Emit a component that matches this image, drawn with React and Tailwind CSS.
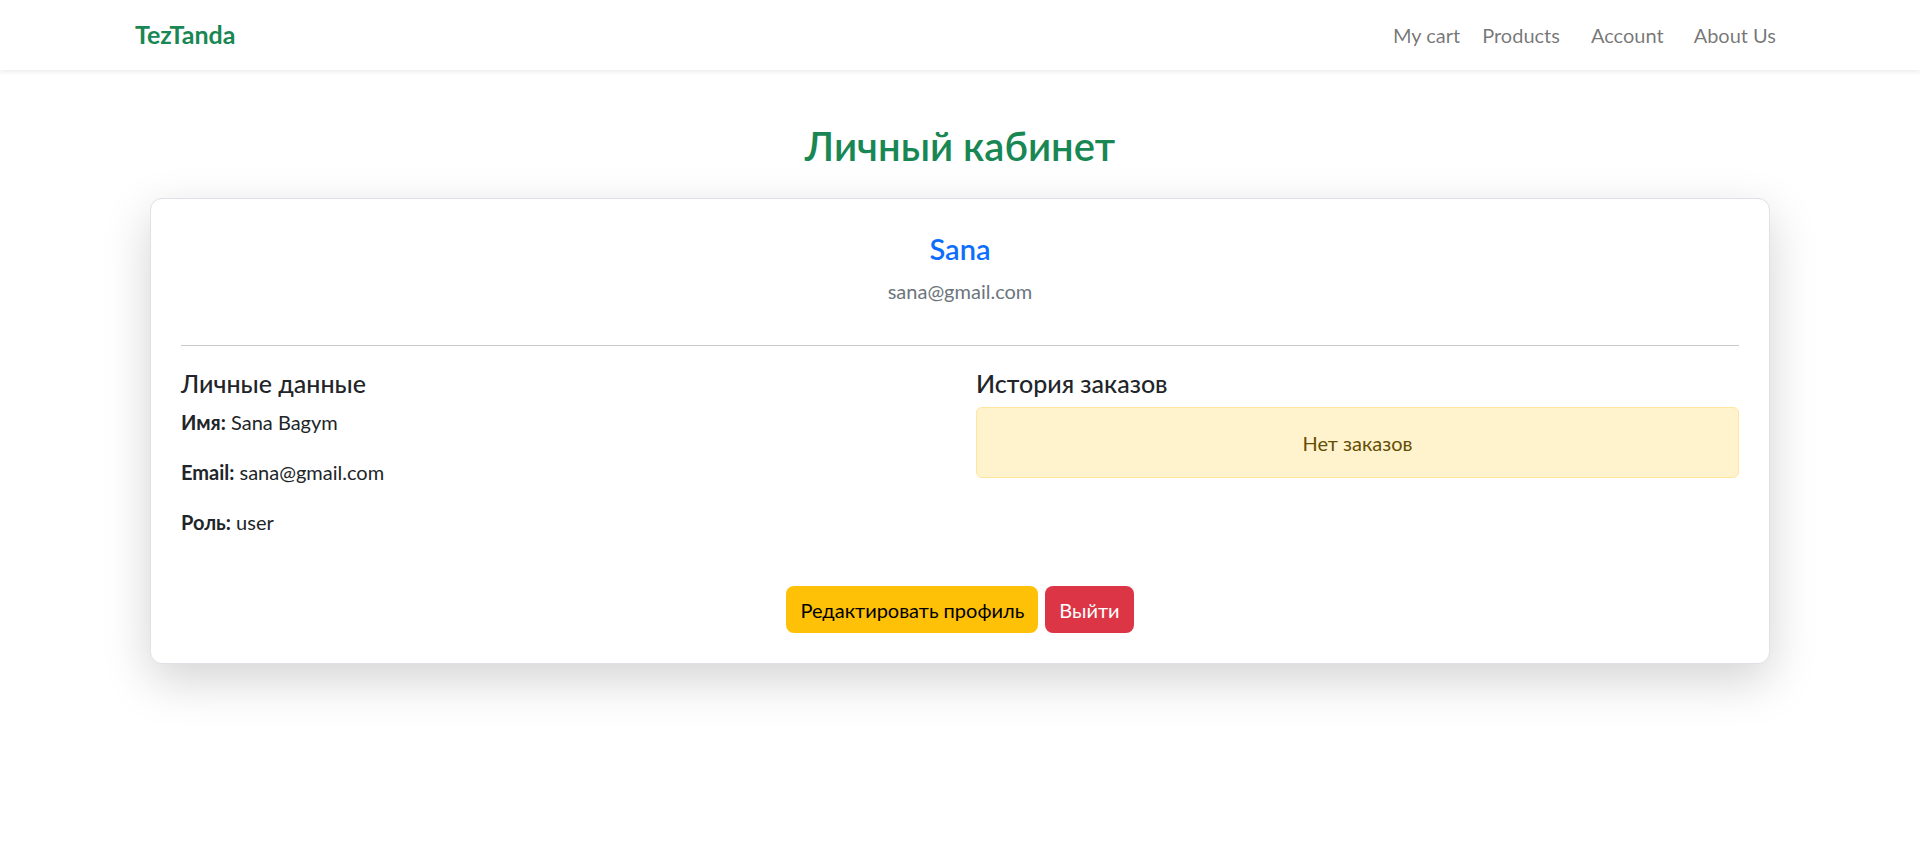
export default function App() {
  return (
    <div className="min-h-screen bg-white font-['Lato','Open_Sans',sans-serif] text-[#212529]">
      <nav className="flex h-[70px] items-center justify-between bg-white pl-[135px] pr-[144px] shadow-[0_2px_4px_rgba(0,0,0,0.075)]">
        <span className="text-[25px] font-bold text-[#198754]">TezTanda</span>
        <div className="flex items-center text-[20px] text-[rgba(0,0,0,0.55)]">
          <a className="mr-[22px]">My cart</a>
          <a className="mr-[31px]">Products</a>
          <a className="mr-[30px]">Account</a>
          <a>About Us</a>
        </div>
      </nav>

      <main className="px-[150px]">
        <h1 className="mt-[52px] mb-[28px] text-center text-[40px] font-semibold leading-[48px] text-[#198754]">
          Личный кабинет
        </h1>

        <div className="rounded-[12px] border border-[#dee2e6] bg-white p-[30px] text-[20px] shadow-[0_16px_48px_rgba(0,0,0,0.175)]">
          <div className="text-center">
            <h3 className="text-[29px] font-semibold leading-[40px] text-[#0d6efd]">Sana</h3>
            <p className="mt-[7px] leading-[30px] text-[#6c757d]">sana@gmail.com</p>
          </div>

          <hr className="mt-[39px] border-t border-[#c8c9ca]" />

          <div className="mt-[23px] grid grid-cols-2 gap-8">
            <div>
              <h4 className="text-[25px] font-medium leading-[29px]">Личные данные</h4>
              <p className="mt-[9px] leading-[30px]">
                <strong>Имя:</strong> Sana Bagym
              </p>
              <p className="mt-[20px] leading-[30px]">
                <strong>Email:</strong> sana@gmail.com
              </p>
              <p className="mt-[20px] leading-[30px]">
                <strong>Роль:</strong> user
              </p>
            </div>
            <div>
              <h4 className="text-[25px] font-medium leading-[29px]">История заказов</h4>
              <div className="mt-[9px] flex h-[71px] items-center justify-center rounded-[6px] border border-[#ffe69c] bg-[#fff3cd] text-[#664d03]">
                Нет заказов
              </div>
            </div>
          </div>

          <div className="mt-[49px] flex justify-center gap-[7px]">
            <button className="h-[47px] rounded-lg bg-[#ffc107] px-[14px] text-[20px] text-black">
              Редактировать профиль
            </button>
            <button className="h-[47px] rounded-lg bg-[#dc3545] px-[14px] text-[20px] text-white">
              Выйти
            </button>
          </div>
        </div>
      </main>
    </div>
  )
}
